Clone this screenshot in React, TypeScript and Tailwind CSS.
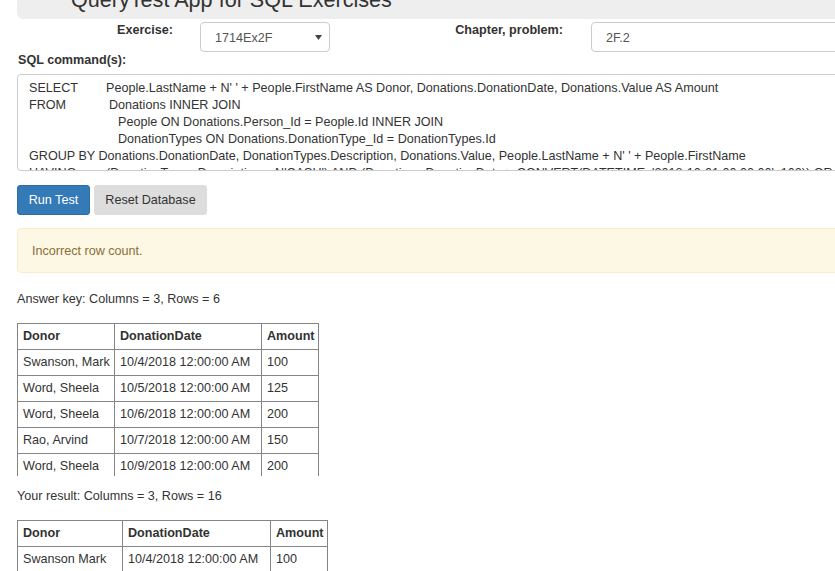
import React from "react";

type Row = [string, string, string];

const answer: Row[] = [
  ["Swanson, Mark", "10/4/2018 12:00:00 AM", "100"],
  ["Word, Sheela", "10/5/2018 12:00:00 AM", "125"],
  ["Word, Sheela", "10/6/2018 12:00:00 AM", "200"],
  ["Rao, Arvind", "10/7/2018 12:00:00 AM", "150"],
  ["Word, Sheela", "10/9/2018 12:00:00 AM", "200"],
  ["Word, Sheela", "10/10/2018 12:00:00 AM", "100"],
];

const result: Row[] = [
  ["Swanson Mark", "10/4/2018 12:00:00 AM", "100"],
  ["Word Sheela", "10/5/2018 12:00:00 AM", "125"],
];

function DataTable({
  rows,
  widths,
  height,
}: {
  rows: Row[];
  widths: [string, string, string];
  height: string;
}) {
  const all: { cells: Row; head: boolean }[] = [
    { cells: ["Donor", "DonationDate", "Amount"], head: true },
    ...rows.map((r) => ({ cells: r, head: false })),
  ];
  return (
    <div className={`${height} w-fit overflow-hidden`}>
      {all.map((r, i) => (
        <div key={i} className="flex w-fit h-[26px] border-t border-[#858585]">
          {r.cells.map((c, j) => (
            <div
              key={j}
              className={`${widths[j]} shrink-0 h-[25px] border-l border-[#858585] ${
                j === 2 ? "border-r" : ""
              } pl-[5px] leading-[25px] whitespace-nowrap overflow-hidden ${r.head ? "font-bold" : ""}`}
            >
              {c}
            </div>
          ))}
        </div>
      ))}
    </div>
  );
}

export default function App() {
  return (
    <div className="w-[835px] h-[571px] overflow-hidden bg-white text-[#333] text-[12.6px] leading-[18px] font-['Liberation_Sans',Arial,sans-serif]">
      <div className="pl-[17px] w-[1000px]">
        {/* Header */}
        <div className="h-[19px] bg-[#eeeeee] rounded-bl-[6px] overflow-hidden pl-[54px]">
          <div className="mt-[-12.5px] text-[21.6px] leading-[24px] whitespace-nowrap text-[#333]">
            QueryTest App for SQL Exercises
          </div>
        </div>

        {/* Exercise row */}
        <div className="flex items-start mt-[3px] h-[30px]">
          <div className="w-[156px] shrink-0 text-right font-bold mt-[-1px]">Exercise:</div>
          <div className="ml-[27px] w-[130px] h-[30px] shrink-0 border border-[#ccc] rounded-[4px] flex items-center justify-between pl-[14px] pr-[6px] text-[#555]">
            <span className="mt-[1px]">1714Ex2F</span>
            <svg width="7" height="5" viewBox="0 0 7 5" className="mt-[1px] mr-[1px]">
              <path d="M0 0 L7 0 L3.5 5 Z" fill="#444" />
            </svg>
          </div>
          <div className="w-[233px] shrink-0 text-right font-bold mt-[-1px]">Chapter, problem:</div>
          <div className="ml-[28px] w-[400px] h-[30px] shrink-0 border border-[#ccc] rounded-[4px] flex items-center pl-[14px] text-[#555]">
            <span className="mt-[1px]">2F.2</span>
          </div>
        </div>

        <div className="font-bold mt-[-1px] pl-[1px]">SQL command(s):</div>

        {/* Textarea */}
        <div className="mt-[5px] h-[97px] border border-[#ccc] rounded-[4px] overflow-hidden pt-[5px] pl-[11px] leading-[17px] whitespace-nowrap text-[#333]">
          <div>
            <span className="inline-block w-[77px]">SELECT</span>
            People.LastName + N' ' + People.FirstName AS Donor, Donations.DonationDate, Donations.Value AS Amount
          </div>
          <div>
            <span className="inline-block w-[80px]">FROM</span>
            Donations INNER JOIN
          </div>
          <div className="pl-[89px]">People ON Donations.Person_Id = People.Id INNER JOIN</div>
          <div className="pl-[89px]">DonationTypes ON Donations.DonationType_Id = DonationTypes.Id</div>
          <div>
            GROUP BY Donations.DonationDate, DonationTypes.Description, Donations.Value, People.LastName + N' ' + People.FirstName
          </div>
          <div>
            <span className="inline-block w-[77px]">HAVING</span>
            (DonationTypes.Description = N'CASH') AND (Donations.DonationDate &gt; CONVERT(DATETIME, '2018-10-01 00:00:00', 102)) OR
          </div>
        </div>

        {/* Buttons */}
        <div className="flex gap-[4px] mt-[14px]">
          <div className="w-[73px] h-[30px] rounded-[3px] bg-[#337ab7] border border-[#2e6da4] text-white flex items-center justify-center">
            Run Test
          </div>
          <div className="w-[113px] h-[30px] rounded-[3px] bg-[#dddddd] text-[#333] flex items-center justify-center">
            Reset Database
          </div>
        </div>

        {/* Alert */}
        <div className="mt-[13px] h-[45px] bg-[#fcf8e3] border border-[#faebcc] rounded-[4px] flex items-center pl-[14px] text-[#8a6d3b]">
          Incorrect row count.
        </div>

        <div className="mt-[17px]">Answer key: Columns = 3, Rows = 6</div>

        <div className="mt-[15px]">
          <DataTable rows={answer} widths={["w-[97px]", "w-[147px]", "w-[58px]"]} height="h-[153px]" />
        </div>

        <div className="mt-[11px]">Your result: Columns = 3, Rows = 16</div>

        <div className="mt-[15px]">
          <DataTable rows={result} widths={["w-[105px]", "w-[148px]", "w-[58px]"]} height="h-[80px]" />
        </div>
      </div>
    </div>
  );
}
